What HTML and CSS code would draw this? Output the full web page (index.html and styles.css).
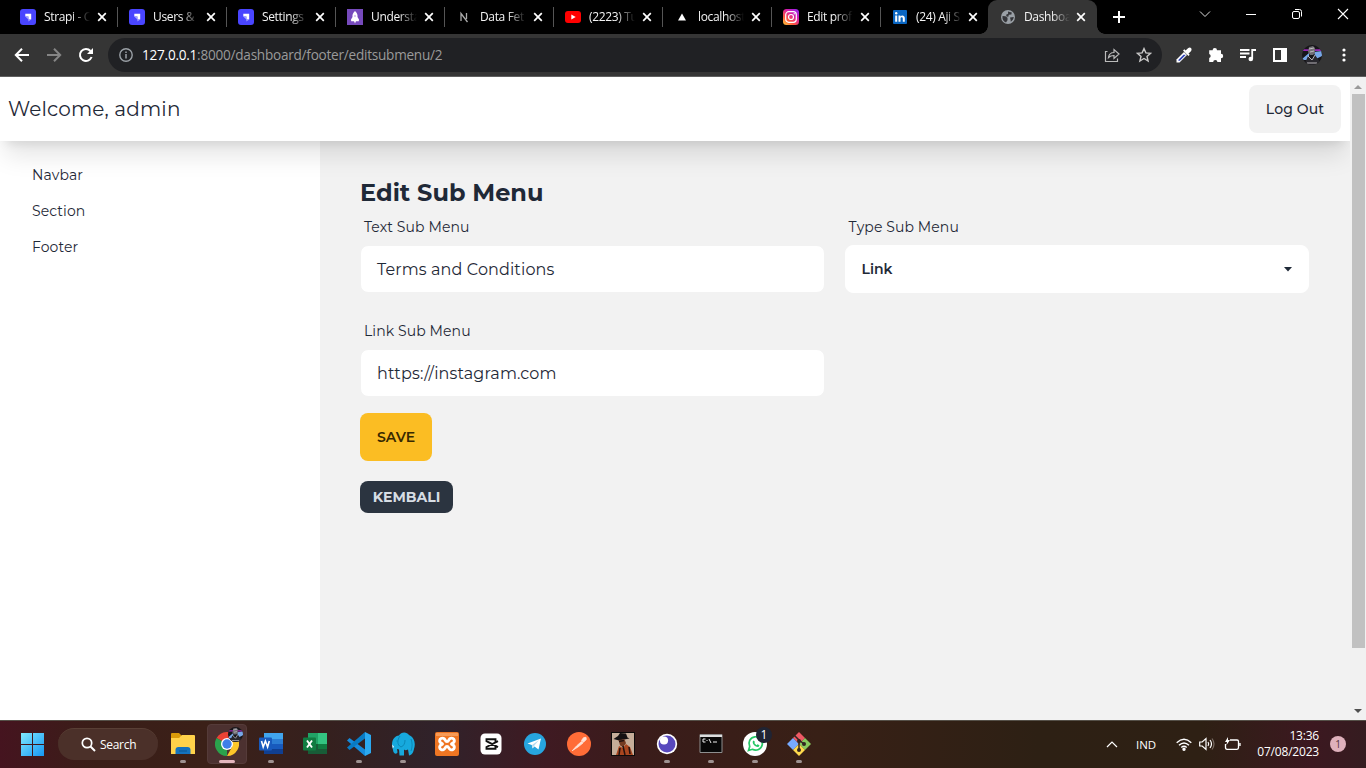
FILE: index.html
```html
<!DOCTYPE html>
<html lang="en">
<head>
<meta charset="utf-8">
<title>Dashboard</title>
<link rel="stylesheet" href="styles.css">
</head>
<body>
<svg class="defs" width="0" height="0">
  <defs>
    <symbol id="x" viewBox="0 0 10 10"><path d="M1.2 1.2l7.6 7.6M8.8 1.2L1.2 8.8" stroke="#fff" stroke-width="1.7"/></symbol>
    <symbol id="strapi" viewBox="0 0 16 16"><rect width="16" height="16" rx="3" fill="#4945ff"/><path d="M5.300 4.800h5.900v5.700H8.400V7.600H5.300z" fill="#fff"/><path d="M5.300 7.600h3.100v2.900z" fill="#a5a3ff"/><path d="M8.400 10.500h2.800l-2.800 2z" fill="#a5a3ff"/></symbol>
    <symbol id="avatar" viewBox="0 0 20 20"><clipPath id="round"><circle cx="10" cy="10" r="10"/></clipPath><g clip-path="url(#round)"><rect width="20" height="20" fill="#161519"/><path d="M0 5.2h20" stroke="#9b28b5" stroke-width="1.800"/><path d="M0 14l7-6v7H2zM12 7l8-1v5l-6 3z" fill="#77a7e8"/><path d="M7 2l4-1 2 2v5l-2 2H8L6 7z" fill="#706d73"/><path d="M3 18l3-7 4 3 3-4 5 7-1 3H4z" fill="#28272d"/><path d="M7 4l5-1M8 7l4-1M6 11l4 4 3-5M5 18h10" fill="none" stroke="#c7c4c9" stroke-width=".9"/></g></symbol>
  </defs>
</svg>

<div class="tabs">
  <div class="tab"><svg class="fav"><use href="#strapi"/></svg><span class="tab-label">Strapi - C</span><svg class="close"><use href="#x"/></svg></div>
  <div class="tab"><svg class="fav"><use href="#strapi"/></svg><span class="tab-label">Users &amp;</span><svg class="close"><use href="#x"/></svg></div>
  <div class="tab"><svg class="fav"><use href="#strapi"/></svg><span class="tab-label">Settings</span><svg class="close"><use href="#x"/></svg></div>
  <div class="tab"><svg class="fav" viewBox="0 0 16 16"><path fill="#764abc" d="M0 0h16v16H0z"/><path d="M8 2c2.200 2 2.800 4 2.500 6l1.500 2.500-.2 1.700H4.200L4 10.500 5.500 8C5.200 6 5.800 4 8 2z" fill="#fff"/><circle cx="8" cy="7" r="1" fill="#d2b6f1"/><path d="M7 12h2l-1 2.500z" fill="#fff"/></svg><span class="tab-label">Understa</span><svg class="close"><use href="#x"/></svg></div>
  <div class="tab"><svg class="fav" viewBox="0 0 16 16"><path d="M5 12V4.500l6.500 8.500M10.500 4v6" fill="none" stroke="#aaa" stroke-width="1.300"/></svg><span class="tab-label">Data Fet</span><svg class="close"><use href="#x"/></svg></div>
  <div class="tab"><svg class="fav" viewBox="0 0 16 16"><rect y="2" width="16" height="12" rx="3" fill="#f00"/><path d="M6.300 5.400v5.200l4.400-2.600z" fill="#fff"/></svg><span class="tab-label">(2223) Tu</span><svg class="close"><use href="#x"/></svg></div>
  <div class="tab"><svg class="fav" viewBox="0 0 16 16"><path d="M8 4.500l4 7H4z" fill="#fff"/></svg><span class="tab-label">localhost</span><svg class="close"><use href="#x"/></svg></div>
  <div class="tab"><svg class="fav" viewBox="0 0 16 16"><defs><linearGradient id="ig" x1="0" y1="1" x2=".8" y2="0"><stop offset="0" stop-color="#ffd13a"/><stop offset=".35" stop-color="#ff543e"/><stop offset=".7" stop-color="#d51bab"/><stop offset="1" stop-color="#9b22e8"/></linearGradient></defs><rect width="16" height="16" rx="3.500" fill="url(#ig)"/><rect x="2.700" y="2.700" width="10.600" height="10.600" rx="3" fill="none" stroke="#fff" stroke-width="1.200"/><circle cx="8" cy="8" r="2.500" fill="none" stroke="#fff" stroke-width="1.200"/><circle cx="11.200" cy="4.800" r=".7" fill="#fff"/></svg><span class="tab-label">Edit prof</span><svg class="close"><use href="#x"/></svg></div>
  <div class="tab last"><svg class="fav" viewBox="0 0 16 16"><rect x="1" y="1" width="14" height="14" rx="1" fill="#0a66c2"/><path d="M3.200 6.500h2v6.300h-2zM6.500 6.500h1.900v1c1.200-1.800 4.400-1.400 4.400 1.500v3.800h-2V9.600c0-2-2.300-1.800-2.300 0v3.200h-2z" fill="#fff"/><circle cx="4.200" cy="4.300" r="1.200" fill="#fff"/></svg><span class="tab-label">(24) Aji S</span><svg class="close"><use href="#x"/></svg></div>
  <div class="tab active"><svg class="fav" viewBox="0 0 16 16"><circle cx="8" cy="8" r="7" fill="#9aa0a6"/><path d="M2.500 7l3 .2 2 1.600v2.400L6 13.500C3.300 12.500 2 10 2.500 7zM8 2.500l3.800 1-.4 2-2.600.3-.5 2-1.800-.3-.4-1.800 2-.9zM10 8.500l3.800-.4c-.3 2.300-1.300 3.600-3 4.700l-.3-2.200z" fill="#35363a"/></svg><span class="tab-label">Dashboa</span><svg class="close"><use href="#x"/></svg></div>
  <svg class="plus" viewBox="0 0 12 12"><path d="M6 0v12M0 6h12" stroke="#fff" stroke-width="2"/></svg>
  <div class="window">
    <svg viewBox="0 0 12 12"><path d="M1 3.500l5 5 5-5" fill="none" stroke="#ddd"/></svg>
    <svg viewBox="0 0 12 12"><path d="M1 6.500h10" stroke="#fff"/></svg>
    <svg viewBox="0 0 12 12"><rect x="1.500" y="3.500" width="7" height="7" rx="1.500" fill="none" stroke="#fff"/><path d="M4 1.500h4.500q2 0 2 2V8.500" fill="none" stroke="#fff"/></svg>
    <svg viewBox="0 0 12 12"><path d="M1 1l10 10M11 1L1 11" stroke="#fff" stroke-width="1.100"/></svg>
  </div>
</div>

<div class="toolbar">
  <svg class="tool" viewBox="0 0 16 16"><path d="M15 8H2.500M8 1.800L1.800 8 8 14.200" fill="none" stroke="#fff" stroke-width="2"/></svg>
  <svg class="tool" viewBox="0 0 16 16"><path d="M1 8h12.500M8 1.800L14.200 8 8 14.200" fill="none" stroke="#858585" stroke-width="2"/></svg>
  <svg class="tool" viewBox="0 0 16 16"><path d="M13.600 10A6 6 0 1 1 12.500 4" fill="none" stroke="#fff" stroke-width="2"/><path d="M15 1v6H9z" fill="#fff"/></svg>
  <div class="omnibox">
    <svg class="info" viewBox="0 0 14 14"><circle cx="7" cy="7" r="6.200" fill="none" stroke="#9aa0a6" stroke-width="1.400"/><path d="M7 6v4.500M7 3.500v1.500" stroke="#9aa0a6" stroke-width="1.500"/></svg>
    <span class="url"><b>127.0.0.1</b>:8000/dashboard/footer/editsubmenu/2</span>
    <svg class="tool" viewBox="0 0 16 16"><path d="M3.500 4.500H1.500v10h12v-3M4.500 10.500c.5-3.500 2.500-5 5.500-5V2.500l5 4.500-5 4.500V8.500c-2.500 0-4 .4-5.500 2z" fill="none" stroke="#bbb" stroke-width="1.200"/></svg>
    <svg class="tool" viewBox="0 0 16 16"><path d="M8 1.600l1.900 4.300 4.600.4-3.500 3.100 1.100 4.600L8 11.500 3.900 14 5 9.400 1.500 6.300l4.600-.4z" fill="none" stroke="#c8c8c8" stroke-width="1.400"/></svg>
  </div>
  <svg class="tool" viewBox="0 0 16 16"><path d="M.5 15.500v-3L8 5l3 3-7.500 7.500z" fill="#fff"/><path d="M2.300 13.700l.2-1 5-5h2.400l-6 6z" fill="#2f43ba"/><path d="M7 3.500l5.500 5.500 1.200-1.200-1.200-1.200 2.200-2.200C17 1.800 14.200-.8 12 1.300L9.600 3.500 8.300 2.300z" fill="#fff"/></svg>
  <svg class="tool" viewBox="0 0 16 16"><path d="M4.600 3.200a2.200 2.200 0 0 1 4.400 0h4v3.600a2.200 2.200 0 0 1 0 4.400V15H9.400a2 2 0 0 0-4.200 0H1.200v-4a2.100 2.100 0 0 0 0-4V3.200z" fill="#fff"/></svg>
  <svg class="tool" viewBox="0 0 16 16"><path d="M0 3h9.500M0 6.500h9.500M0 10h6M12.200 12V3H16" fill="none" stroke="#fff" stroke-width="1.800"/><circle cx="10.800" cy="12" r="2.300" fill="#fff"/></svg>
  <svg class="tool" viewBox="0 0 16 16"><path fill-rule="evenodd" d="M1 1h14v14H1zM3 3v10h6V3z" fill="#fff"/></svg>
  <svg class="face"><use href="#avatar"/></svg>
  <svg class="tool" viewBox="0 0 16 16" fill="#fff"><circle cx="8" cy="3" r="1.600"/><circle cx="8" cy="8" r="1.600"/><circle cx="8" cy="13" r="1.600"/></svg>
</div>

<div class="page">
  <div class="document">
    <header class="header"><span class="welcome">Welcome, admin</span><button class="logout">Log Out</button></header>
    <div class="body">
      <nav class="sidebar"><a>Navbar</a><a>Section</a><a>Footer</a></nav>
      <main class="content">
        <h1 class="title">Edit Sub Menu</h1>
        <div class="form">
          <label class="field"><span class="label">Text Sub Menu</span><span class="input">Terms and Conditions</span></label>
          <label class="field"><span class="label">Type Sub Menu</span><span class="input select">Link<svg width="8" height="5" viewBox="0 0 8 5"><path d="M0 0h8L4 4.500z" fill="#1f2937"/></svg></span></label>
          <label class="field"><span class="label">Link Sub Menu</span><span class="input">https://instagram.com</span></label>
        </div>
        <button class="save">SAVE</button>
        <a class="back">KEMBALI</a>
      </main>
    </div>
  </div>
  <div class="scroll">
    <svg width="8" height="4" viewBox="0 0 8 4"><path d="M0 4h8L4 0z" fill="#999"/></svg>
    <div class="thumb"></div>
    <svg width="8" height="4" viewBox="0 0 8 4"><path d="M0 0h8L4 4z" fill="#505050"/></svg>
  </div>
</div>

<footer class="taskbar">
  <svg class="windows" viewBox="0 0 23 23"><defs><linearGradient id="wn" x2="1" y2="1"><stop stop-color="#80eaff"/><stop offset="1" stop-color="#1596f4"/></linearGradient></defs><path d="M0 0h11v11H0zM12 0h11v11H12zM0 12h11v11H0zM12 12h11v11H12z" fill="url(#wn)"/></svg>
  <div class="search"><svg width="15" height="15" viewBox="0 0 15 15"><circle cx="6" cy="6" r="4.700" fill="none" stroke="#fff" stroke-width="1.700"/><path d="M9.500 9.500l4.500 4.500" stroke="#fff" stroke-width="1.900"/></svg>Search</div>
  <div class="apps">
    <div class="app run"><svg viewBox="0 0 24 24"><path d="M0 2q0-1 1-1h7l3 3v5H0z" fill="#d99a09"/><path d="M0 6h8l3-3h12q1 0 1 1v18H0z" fill="#ffd24a"/><path d="M4.500 22v-4q0-3 3-3h9q3 0 3 3v4z" fill="#1472bd"/><path d="M8 19h8" stroke="#0b5590"/></svg></div>
    <div class="app run chrome"><svg viewBox="0 0 24 24"><path d="M12 12L1.600 6A12 12 0 0 1 22.400 6z" fill="#e94235"/><path d="M12 12v12A12 12 0 0 1 1.600 6z" fill="#2ba24c"/><path d="M12 12l10.400-6A12 12 0 0 1 12 24l5-9z" fill="#fcc629"/><circle cx="12" cy="12" r="6" fill="#fff"/><circle cx="12" cy="12" r="4.700" fill="#3f7fe8"/></svg><svg class="mini"><use href="#avatar"/></svg></div>
    <div class="app run"><svg viewBox="0 0 24 24"><path fill="#41a5ee" d="M5 1h19v6H5z"/><path fill="#2b7cd3" d="M5 7h19v5H5z"/><path fill="#185abd" d="M5 12h19v5H5z"/><path fill="#103f91" d="M5 17h19v5H5z"/><rect y="5.500" width="13" height="13" rx="1" fill="#185abd"/><path d="M2.500 9l1.700 6 2.200-6 2.200 6 1.700-6" fill="none" stroke="#fff" stroke-width="1.600"/></svg></div>
    <div class="app"><svg viewBox="0 0 24 24"><path fill="#21a366" d="M5 1h10v11H5z"/><path fill="#33c481" d="M15 1h9v11h-9z"/><path fill="#107c41" d="M15 12h9v5h-9z"/><path fill="#185c37" d="M5 12h10v5h9v5H5z"/><rect y="5.500" width="13" height="13" rx="1" fill="#107c41"/><path d="M4 8.500l5 7M9 8.500l-5 7" stroke="#fff" stroke-width="1.900"/></svg></div>
    <div class="app run"><svg viewBox="0 0 24 24"><path d="M2.500 6L20 19l-2 5L0 8.500z" fill="#168bdc"/><path d="M0 15.500L18 0l2 5L2.500 18z" fill="#087bc4"/><path d="M18 0l6 3v18l-6 3z" fill="#2ba9f0"/></svg></div>
    <div class="app run"><svg viewBox="0 0 24 24"><path d="M1 13C1 7 4 4 8 3.500 10-.5 16-.5 18 3c5 2 7 8 5 14-1 4-2 6-5 6.500l-1-6c-2 1-3 1-4 0v6H8.500l-.5-6-2-.5.5 3C6.500 22 2.500 23 2 18z" fill="#17a9dd"/><path d="M9 4c-3 4-3 9 1 11 3-1 4-4 4-7M5.500 9h.8M20 7c1.500 4 1.500 8 0 12" fill="none" stroke="#087fac" stroke-width=".8"/><path d="M1 12.500l.8 4 1.200-2z" fill="#e4f6ff"/></svg></div>
    <div class="app"><svg viewBox="0 0 24 24"><rect width="24" height="24" rx="2" fill="#ef7623"/><path d="M1 1h22v3H1z" fill="#f79b57"/><path d="M8.500 6.300C4.500 5 3 10.500 7 11.500q1 .5 0 1C3 13.500 4.500 19 8.500 17.700c2-.7 1.500-3.200 3.500-3.200s1.500 2.500 3.500 3.200c4 1.300 5.500-4.200 1.500-5.200q-1-.5 0-1c4-1 2.500-6.500-1.500-5.200-2 .7-1.500 3.200-3.500 3.200S10.500 7 8.500 6.300z" fill="none" stroke="#fff" stroke-width="2.900"/></svg></div>
    <div class="app"><svg viewBox="0 0 24 24"><rect x="1.500" y="1.500" width="21" height="21" rx="4.500" fill="#fff"/><path d="M19 9.200L7.500 15v1.800h9v-2.600M19 15.200L7.500 9.200V7.200h9v2.600" fill="none" stroke="#111" stroke-width="1.900"/></svg></div>
    <div class="app"><svg viewBox="0 0 24 24"><circle cx="12" cy="12" r="11" fill="#27a5df"/><path d="M4.500 11.500L18 6.500l-2.500 11-4-3-2 2-.7-3.500z" fill="#fff"/><path d="M9 13l7-5-5 6-1.500 2z" fill="#b7dbef"/></svg></div>
    <div class="app"><svg viewBox="0 0 24 24"><circle cx="12" cy="12" r="12" fill="#ff6c37"/><path d="M5 19l4.500-5 5-4.500 1.500 1.500-5 4-5.500 3.500M14.500 8.500l2-2.800 2.500-.4.300 2.300-2.800 2.600z" stroke="#ffe2d7" stroke-width=".8" fill="#ffe2d7"/></svg></div>
    <div class="app"><svg viewBox="0 0 24 24"><path d="M0 0h24v24H0z" fill="#0c0a0a"/><path d="M1 1h22v22H1z" fill="#c5ad99"/><path d="M2.500 7L7 4l2-3 6 .5 1.500 4 2 1L8 8.500z" fill="#151112"/><path d="M7.500 8l6-.7 1.500 4-3 4-3-2z" fill="#743b22"/><path d="M5 23l3-9 4 2 3-4 4 3 3 8z" fill="#a9461f"/><path d="M12 14l2 9M9 16l-1 7M18 15l1 7M8 9.500l5-1" stroke="#24110e" stroke-width="1.500"/></svg></div>
    <div class="app run"><svg viewBox="0 0 24 24"><circle cx="12" cy="12" r="10.200" fill="#fff"/><circle cx="12" cy="12" r="8.500" fill="#5849be"/><circle cx="9" cy="8.500" r="4.100" fill="#fff"/></svg></div>
    <div class="app run"><svg viewBox="0 0 24 24"><path d="M1 2.500h22v18H1z" fill="#080808" stroke="#8e8e8e"/><path d="M1 3h22v2H1z" fill="#ddd"/><path d="M6.500 7H4v3h2.500M8 8v1M10 7l2 4M14 10h4" fill="none" stroke="#eee"/></svg></div>
    <div class="app run"><svg viewBox="0 0 24 24"><circle cx="12" cy="12" r="12" fill="#fff"/><path d="M5.500 18.500l1.200-4a6.700 6.700 0 1 1 2.700 2.800z" fill="none" stroke="#25c765" stroke-width="1.700"/><path d="M10.500 8.500c-2.500 2 1.500 7 5 6.500l1-1.800-2-1-1 1-2.200-2.300.8-1z" fill="#25c765"/></svg><span class="count">1</span></div>
    <div class="app run"><svg viewBox="0 0 24 24"><path d="M12 0l6 6-6 6-6-6z" fill="#ee5964"/><path d="M6 6l6 6-6 6-6-6z" fill="#77aaff"/><path d="M18 6l6 6-6 6-6-6z" fill="#87c95e"/><path d="M12 12l6 6-6 6-6-6z" fill="#ffd94c"/><path d="M7 3l5 5v11M12 8l5 4" fill="none" stroke="#302522" stroke-width="1.500"/><circle cx="12" cy="9" r="2" fill="#302522"/><circle cx="17" cy="12" r="2" fill="#302522"/><circle cx="12" cy="18" r="2" fill="#302522"/></svg></div>
  </div>
  <div class="tray">
    <svg width="12" height="8" viewBox="0 0 12 8"><path d="M1 7l5-5 5 5" fill="none" stroke="#fff" stroke-width="1.200"/></svg>
    <span class="lang">IND</span>
    <svg class="wifi" width="16" height="13" viewBox="0 0 16 13" fill="none" stroke="#fff" stroke-width="1.400"><path d="M.7 4.700Q8-2.300 15.300 4.700M3 7.300q5-4.800 10 0M5.300 9.600q2.700-2.500 5.400 0"/><circle cx="8" cy="11.300" r="1" fill="#fff"/></svg>
    <svg class="speaker" width="16" height="14" viewBox="0 0 16 14" fill="none" stroke="#fff" stroke-width="1.200"><path d="M.7 5h2.500L7 1.500v11L3.200 9H.7zM9 5q1.500 2 0 4M11 3q3 4 0 8"/><path d="M13 1.500q4 5.500 0 11" stroke="#776a61"/></svg>
    <svg class="battery" width="17" height="14" viewBox="0 0 17 14" fill="none" stroke="#fff" stroke-width="1.300"><path d="M6 3h7q1.500 0 1.500 1.500v6Q14.500 12.300 13 12.300H3Q1.500 12.300 1.500 10.500V7M16 6v3"/><path d="M4 0L1 5h2L2.500 8 6 3H4z" fill="#fff" stroke="none"/></svg>
    <div class="clock"><div>13:36</div><div class="date">07/08/2023</div></div>
    <span class="notice">1</span>
  </div>
</footer>
</body>
</html>
```
FILE: styles.css
```css
* { box-sizing: border-box; }
body { margin: 0; width: 1366px; height: 768px; overflow: hidden; display: flex; flex-direction: column; font-family: "Open Sans", sans-serif; }
svg { display: block; flex: none; }
.defs { position: absolute; }
button { border: 0; font: inherit; }

.tabs { height: 34px; flex: none; background: #000; display: flex; align-items: center; padding-left: 9px; }
.tab { width: 109px; height: 34px; flex: none; display: flex; align-items: center; padding-left: 11px; color: #f4f4f4; background: linear-gradient(#555, #555) right 7px / 1px 20px no-repeat; }
.tab.last { background: none; width: 107px; }
.tab.active { background: #353535; border-radius: 9px 9px 0 0; width: 109px; padding-left: 12px; position: relative; }
.tab.active .close { margin-left: 6px; }
.tab.last .close { margin-left: 6px; }
.tab.active::before, .tab.active::after { content: ""; position: absolute; bottom: 0; width: 8px; height: 8px; }
.tab.active::before { left: -8px; background: radial-gradient(circle at 0 0, transparent 7.5px, #353535 8px); }
.tab.active::after { right: -8px; background: radial-gradient(circle at 100% 0, transparent 7.5px, #353535 8px); }
.fav { width: 16px; height: 16px; margin-right: 8px; }
.tab-label { width: 46px; font-size: 12px; letter-spacing: -.35px; line-height: 18px; white-space: nowrap; -webkit-mask-image: linear-gradient(90deg, #000 60%, transparent); mask-image: linear-gradient(90deg, #000 60%, transparent); }
.close { width: 10px; height: 10px; margin-left: 7px; }
.plus { width: 12px; height: 12px; margin-left: 16px; }
.window { margin-left: auto; display: flex; align-items: center; gap: 34px; padding-right: 17px; height: 28px; align-self: flex-start; }
.window svg { width: 12px; height: 12px; }

.toolbar { height: 43px; flex: none; background: #353535; border-bottom: 1px solid #5f5f5f; display: flex; align-items: center; padding: 0 14px; gap: 16px; }
.tool { width: 16px; height: 16px; }
.omnibox { width: 1054px; height: 34px; border-radius: 17px; background: #202124; margin: 0 -2px; display: flex; align-items: center; gap: 16px; padding: 0 10px 0 11px; }
.info { width: 14px; height: 14px; }
.url { flex: 1; margin-left: -7px; font-size: 13.6px; line-height: 20px; color: #9a9a9a; letter-spacing: -.25px; }
.url b { font-weight: 400; color: #fff; }
.face { width: 20px; height: 20px; margin: 0 -2px; }

.page { height: 643px; flex: none; display: flex; background: #f2f2f2; color: #1f2937; font-family: Montserrat, Inter, sans-serif; }
.document { width: 1350px; display: flex; flex-direction: column; overflow: hidden; }
.header { height: 64px; flex: none; background: #fff; display: flex; align-items: center; justify-content: space-between; padding: 0 9px 0 8px; position: relative; z-index: 1; box-shadow: 0 20px 25px -5px rgba(0,0,0,.1), 0 8px 10px -6px rgba(0,0,0,.1); }
.welcome { font-size: 20px; letter-spacing: .15px; }
.logout { width: 92px; height: 48px; border-radius: 8px; background: #f2f2f2; color: #1f2937; font-size: 14px; font-weight: 500; letter-spacing: .1px; padding: 0; }
.body { flex: 1; display: flex; }
.sidebar { width: 320px; background: #fff; padding: 24px 32px; display: flex; flex-direction: column; gap: 16px; font-size: 14px; line-height: 20px; letter-spacing: .1px; }
.content { flex: 1; padding: 36px 41px 0 40px; display: flex; flex-direction: column; align-items: flex-start; }
.title { margin: 0; font-size: 24px; line-height: 32px; font-weight: 700; }
.form { width: 949px; display: grid; grid-template-columns: 1fr 1fr; gap: 20px; }
.field { display: flex; flex-direction: column; height: 84px; }
.label { height: 36px; padding: 8px 4px; font-size: 14px; line-height: 20px; letter-spacing: .1px; }
.input { height: 48px; border: 1px solid #f2f2f2; border-radius: 8px; background: #fff; display: flex; align-items: center; padding: 0 16px; font-size: 16px; letter-spacing: .13px; }
.select { border-color: #fff; font-size: 14px; font-weight: 600; justify-content: space-between; letter-spacing: 0; }
.save { margin-top: 16px; width: 72px; height: 48px; border-radius: 8px; background: #fbbd23; color: #382800; font-size: 14px; font-weight: 600; padding: 0; }
.back { margin-top: 20px; width: 93px; height: 32px; border-radius: 8px; background: #2b3440; color: #d7dde4; font-size: 14px; font-weight: 700; display: flex; align-items: center; justify-content: center; }
.scroll { width: 16px; background: #f1f1f1; display: flex; flex-direction: column; align-items: center; padding: 8px 0 7px; }
.thumb { width: 13px; height: 554px; background: #c1c1c1; margin: 5px 0 auto; }

.taskbar { height: 48px; flex: none; box-shadow: inset 0 1px #555048; display: flex; align-items: center; background: linear-gradient(90deg, #45141f, #3a1e18 7%, #3b2018 15%, #35201e 24%, #30222a 32%, #3f1a22 40%, #3a1c1a 47%, #382016 60%, #2d2014 76%, #2e2014 88%, #3c1820 96%, #351c20); color: #fff; }
.windows { width: 23px; height: 23px; margin-left: 21px; }
.search { width: 100px; height: 32px; margin-left: 14px; border-radius: 16px; background: #4b3029; border-top: 1px solid #593f35; display: flex; align-items: center; gap: 4px; padding-left: 23px; font-size: 12px; letter-spacing: -.3px; }
.apps { display: flex; gap: 4px; margin-left: 5px; }
.app { width: 40px; height: 40px; border-radius: 4px; display: flex; align-items: center; justify-content: center; position: relative; }
.app > svg { width: 24px; height: 24px; }
.run::after { content: ""; position: absolute; left: 17px; bottom: 1px; width: 6px; height: 3px; border-radius: 2px; background: #9e9291; }
.chrome { background: #4c3130; border: 1px solid #553b39; }
.chrome::after { left: 11px; bottom: 0; width: 16px; background: #e5b6bd; }
.app > .mini { position: absolute; width: 15px; height: 15px; right: 3px; top: 2px; }
.count { position: absolute; left: 21px; top: 3px; width: 16px; height: 16px; border-radius: 50%; background: #202433; text-align: center; font: 12px/16px "Open Sans", sans-serif; }
.tray { margin-left: auto; display: flex; align-items: center; font-size: 12px; padding-right: 20px; }
.lang { margin-left: 18px; width: 21px; font-size: 11.5px; font-weight: 500; }
.wifi { margin-left: 19px; }
.speaker { margin-left: 7px; }
.battery { margin-left: 9px; }
.clock { width: 78px; text-align: right; line-height: 16px; font-size: 12px; letter-spacing: -.2px; }
.notice { margin-left: 11px; width: 16px; height: 16px; border-radius: 50%; background: #dfb1bc; color: #55353d; text-align: center; font-size: 10px; line-height: 16px; }
```
